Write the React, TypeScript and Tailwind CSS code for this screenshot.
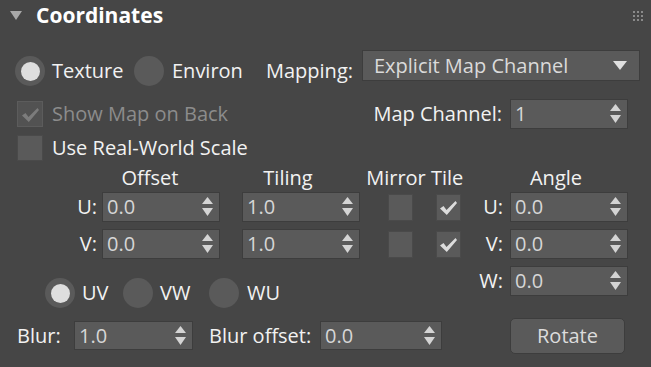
import React from "react";

const FONT = { fontFamily: '"Open Sans", "Noto Sans", sans-serif' };

function Arrows() {
  return (
    <svg width="11" height="20" viewBox="0 0 11 20" className="absolute right-[6px] top-1/2 -translate-y-1/2">
      <polygon points="5.5,0 11,7 0,7" fill="#d4d4d4" />
      <polygon points="0,11 11,11 5.5,19" fill="#d4d4d4" />
    </svg>
  );
}

function Spin({ value, className }: { value: string; className: string }) {
  return (
    <div className={`relative flex items-center bg-[#5a5a5a] border border-[#3d3d3d] text-[#d6d6d6] pl-[4px] ${className}`}>
      <span>{value}</span>
      <Arrows />
    </div>
  );
}

function Tick({ color }: { color: string }) {
  return (
    <svg width="19" height="17" viewBox="0 0 19 17">
      <path d="M1 9.5 L4.5 7 L7.5 11 L16.5 2 L18 4 L7.8 16 Z" fill={color} />
    </svg>
  );
}

function Check({ checked, disabled }: { checked?: boolean; disabled?: boolean }) {
  return (
    <div
      className={`flex items-center justify-center border ${
        disabled ? "bg-[#525252] border-[#5c5c5c]" : "bg-[#5a5a5a] border-[#4a4a4a]"
      } w-[26px] h-[26px] shrink-0`}
    >
      {checked && <Tick color={disabled ? "#7c7c7c" : "#dcdcdc"} />}
    </div>
  );
}

function SmallCheck({ checked }: { checked?: boolean }) {
  return (
    <div className="flex items-center justify-center bg-[#5a5a5a] border border-[#4a4a4a] w-[25px] h-[27px] shrink-0">
      {checked && <Tick color="#dcdcdc" />}
    </div>
  );
}

function Radio({ on }: { on?: boolean }) {
  return (
    <div className="w-[30px] h-[30px] rounded-full bg-[#5a5a5a] flex items-center justify-center shrink-0">
      {on && <div className="w-[19px] h-[19px] rounded-full bg-[#dedede]" />}
    </div>
  );
}

export default function App() {
  return (
    <div
      className="w-[651px] h-[367px] bg-[#464646] text-[#f2f2f2] text-[20px] leading-none overflow-hidden flex flex-col"
      style={FONT}
    >
      {/* header */}
      <div className="relative h-[31px] flex items-center pl-[10px]">
        <svg width="12" height="9" viewBox="0 0 12 9">
          <polygon points="0,0 12,0 6,9" fill="#a8a8a8" />
        </svg>
        <span className="ml-[14px] font-bold text-[21px] text-white">Coordinates</span>
        <div className="absolute right-[8px] top-[11px] grid grid-cols-3 gap-[2px]">
          {Array.from({ length: 9 }).map((_, i) => (
            <div key={i} className="w-[2px] h-[2px] bg-[#8a8a8a]" />
          ))}
        </div>
      </div>

      {/* row 1 */}
      <div className="mt-[19px] flex items-start">
        <div className="mt-[6px] h-[30px] flex items-center pl-[15px]">
          <Radio on />
          <span className="ml-[7px] w-[82px]">Texture</span>
          <Radio />
          <span className="ml-[8px] w-[94px]">Environ</span>
          <span className="w-[96px]">Mapping:</span>
        </div>
        <div className="relative w-[278px] h-[31px] bg-[#5a5a5a] border border-[#3d3d3d] flex items-center pl-[11px] text-[#dadada]">
          Explicit Map Channel
          <svg width="14" height="9" viewBox="0 0 14 9" className="absolute right-[12px] top-[10px]">
            <polygon points="0,0 14,0 7,9" fill="#e0e0e0" />
          </svg>
        </div>
      </div>

      {/* row 2 */}
      <div className="mt-[13px] h-[30px] flex items-center pl-[17px] pr-[23px]">
        <Check checked disabled />
        <span className="ml-[9px] flex-1 text-[#8c8c8c]">Show Map on Back</span>
        <span>Map Channel:</span>
        <Spin value="1" className="ml-[8px] w-[118px] h-[30px]" />
      </div>

      {/* row 3 */}
      <div className="mt-[4px] h-[30px] flex items-center pl-[17px]">
        <Check />
        <span className="ml-[9px]">Use Real-World Scale</span>
      </div>

      {/* headers */}
      <div className="mt-[2px] h-[26px] flex items-center pl-[78px]">
        <span className="w-[144px] text-center">Offset</span>
        <span className="w-[132px] text-center">Tiling</span>
        <span className="ml-[7px] w-[70px] text-center">Mirror</span>
        <span className="w-[32px] text-center">Tile</span>
        <span className="w-[186px] text-center">Angle</span>
      </div>

      {[
        { l: "U", mt: "mt-[1px]" },
        { l: "V", mt: "mt-[7px]" },
      ].map((r) => (
        <div key={r.l} className={`${r.mt} h-[30px] flex items-center pl-[50px]`}>
          <span className="w-[47px] text-right">{r.l}:</span>
          <Spin value="0.0" className="ml-[5px] w-[118px] h-[30px]" />
          <Spin value="1.0" className="ml-[22px] w-[118px] h-[30px]" />
          <div className="ml-[28px]">
            <SmallCheck />
          </div>
          <div className="ml-[23px]">
            <SmallCheck checked />
          </div>
          <span className="w-[42px] text-right">{r.l}:</span>
          <Spin value="0.0" className="ml-[7px] w-[118px] h-[30px]" />
        </div>
      ))}

      {/* bottom */}
      <div className="mt-[7px] flex">
        <div className="w-[461px] flex flex-col">
          <div className="mt-[12px] h-[30px] flex items-center pl-[45px]">
            <Radio on />
            <span className="ml-[7px] w-[41px]">UV</span>
            <Radio />
            <span className="ml-[7px] w-[49px]">VW</span>
            <Radio />
            <span className="ml-[8px]">WU</span>
          </div>
          <div className="mt-[13px] h-[29px] flex items-center pl-[17px]">
            <span className="w-[57px]">Blur:</span>
            <Spin value="1.0" className="w-[119px] h-[29px]" />
            <span className="ml-[16px] w-[111px]">Blur offset:</span>
            <Spin value="0.0" className="w-[122px] h-[29px]" />
          </div>
        </div>
        <div className="flex flex-col">
          <div className="h-[30px] flex items-center">
            <span className="w-[42px] text-right">W:</span>
            <Spin value="0.0" className="ml-[7px] w-[118px] h-[30px]" />
          </div>
          <button className="mt-[22px] ml-[49px] w-[115px] h-[36px] rounded-[5px] bg-[#5a5a5a] border border-[#3d3d3d] text-[#dcdcdc]">
            Rotate
          </button>
        </div>
      </div>
    </div>
  );
}
